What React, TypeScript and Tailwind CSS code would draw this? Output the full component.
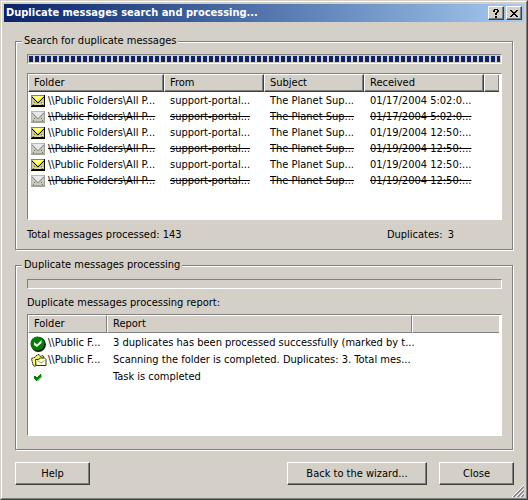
import type { ReactNode } from "react";

type Row = { icon: ReactNode; cells: string[]; struck?: boolean };

const MailIcon = ({ dim }: { dim?: boolean }) => (
  <svg width="16" height="12" viewBox="-1 0 16 12" shapeRendering="crispEdges">
    <path d="M0 0h14v12H0z" fill={dim ? "#a0a0a0" : "#000"} />
    <path d="M0 0h13v1H1v10H0z" fill={dim ? "#b8b8b8" : "#808080"} />
    <path d="M1 1h12v9H1z" fill={dim ? "#c8c8c8" : "#c8c890"} />
    <path d="M2 1h10v1h-1v1h-1v1H9v1H8v1H6V5H5V4H4V3H3V2H2z" fill={dim ? "#e8e8e8" : "#ffffc0"} />
    {!dim && (
      <path
        d="M3 1h1v1H3zM6 1h1v1H6zM9 1h1v1H9zM5 2h1v1H5zM8 2h1v1H8zM4 3h1v1H4zM7 3h1v1H7zM9 3h1v1H9zM6 4h1v1H6zM7 5h1v1H7zM2 8h1v1H2zM4 9h1v1H4zM6 9h1v1H6zM8 9h1v1H8zM11 8h1v1h-1z"
        fill="#ffff00"
      />
    )}
    <path
      d="M1 2h1v1H1zM2 3h1v1H2zM3 4h1v1H3zM4 5h1v1H4zM5 6h1v1H5zM6 7h2v1H6zM8 6h1v1H8zM9 5h1v1H9zM10 4h1v1h-1zM11 3h1v1h-1zM12 2h1v1h-1z"
      fill={dim ? "#909090" : "#000"}
    />
    <path d="M3 7h1v1H3zM2 9h1v1H2zM10 7h1v1h-1zM11 9h1v1h-1z" fill="#808000" />
  </svg>
);

const DoneIcon = () => (
  <svg width="16" height="16" viewBox="0 0 16 16">
    <circle cx="8.400" cy="8.400" r="7.500" fill="#101010" />
    <circle cx="7.500" cy="7.500" r="7" fill="#008000" />
    <path d="M4 6l3 2.500L11.500 4v3L7 11 4 9z" fill="#ffffff" />
  </svg>
);

const FolderIcon = () => (
  <svg width="17" height="14" viewBox="-1 0 17 14">
    <path d="M.5 4.500l4-1.500L6 1l2-.5L9 2.500l3-1 1 2-7 2L4 12.500 2 11z" fill="#ffff60" stroke="#202020" strokeDasharray="2 .5" />
    <path d="M4.500 5.500h3l2-1.500h4l1.500 1.500v6h-10z" fill="#ffffd8" stroke="#303030" />
    <path d="M6.500 6.500l3.500 2.500 3.500-2.500" fill="none" stroke="#a0a070" />
  </svg>
);

const TickIcon = () => (
  <svg width="16" height="9" viewBox="-4 0 16 9" shapeRendering="crispEdges">
    <path d="M1 4l2 2 5-5v3L4 8H3L1 6z" fill="#b0b0b0" />
    <path d="M0 3h1l2 2 4-5v3L3 8H2L0 5z" fill="#008000" />
  </svg>
);

const messages: Row[] = [
  "01/17/2004 5:02:0...",
  "01/17/2004 5:02:0...",
  "01/19/2004 12:50:...",
  "01/19/2004 12:50:...",
  "01/19/2004 12:50:...",
  "01/19/2004 12:50:...",
].map((received, i) => ({
  icon: <MailIcon dim={i % 2 === 1} />,
  cells: ["\\\\Public Folders\\All P...", "support-portal...", "The Planet Sup...", received],
  struck: i % 2 === 1,
}));

const report: Row[] = [
  { icon: <DoneIcon />, cells: ["\\\\Public F...", "3 duplicates has been processed successfully (marked by t..."] },
  { icon: <FolderIcon />, cells: ["\\\\Public F...", "Scanning the folder is completed. Duplicates: 3. Total mes..."] },
  { icon: <TickIcon />, cells: ["", "Task is completed"] },
];

const Group = ({ title, children }: { title: string; children: ReactNode }) => (
  <fieldset className="min-w-0 mr-px border border-[#808080] pr-[10px] pl-[11px] shadow-[1px_1px_0_#fff,inset_1px_1px_0_#fff]">
    <legend className="-ml-[5px] bg-[#d4d0c8] px-[2px] h-[14px] leading-[14px]">{title}</legend>
    {children}
  </fieldset>
);

const Progress = ({ value, label }: { value: number; label: string }) => (
  <div
    role="progressbar"
    aria-label={label}
    aria-valuenow={value}
    className="h-[10px] border border-t-[#808080] border-l-[#808080] border-r-white border-b-white p-px"
  >
    <div
      className="h-[6px] bg-[repeating-linear-gradient(90deg,#0a246a_0_4px,transparent_4px_6px)]"
      style={{ width: `${value}%` }}
    />
  </div>
);

type ListProps = {
  label: string;
  columns: string[];
  widths: string[];
  rows: Row[];
  boxClass: string;
  headClass: string;
  gapClass: string;
  rowClass: string;
};

const List = ({ label, columns, widths, rows, boxClass, headClass, gapClass, rowClass }: ListProps) => (
  <div className={`border border-t-[#808080] border-l-[#808080] border-r-white border-b-white bg-white pr-[2px] ${boxClass}`}>
    <table aria-label={label} className="w-full table-fixed border-separate border-spacing-0">
      <colgroup>
        {widths.map((w, i) => (
          <col key={i} className={w} />
        ))}
        <col />
      </colgroup>
      <thead>
        <tr>
          {columns.map((c) => (
            <th
              key={c}
              className={`h-[18px] border border-t-white border-l-white bg-[#d4d0c8] p-0 pl-[5px] text-left font-normal leading-[14px] ${headClass}`}
            >
              {c}
            </th>
          ))}
          <th className={`border border-t-white border-l-white bg-[#d4d0c8] p-0 ${headClass} border-r-0`} />
        </tr>
      </thead>
      <tbody>
        <tr aria-hidden="true">
          <td className={`p-0 ${gapClass}`} />
        </tr>
        {rows.map((row, i) => (
          <tr key={i}>
            {row.cells.map((cell, j) => (
              <td key={j} className="p-0">
                <div className={`flex items-center whitespace-nowrap ${rowClass} ${j === 0 ? "pl-[2px]" : "pl-[6px]"}`}>
                  {j === 0 && <span className="flex w-[18px] shrink-0">{row.icon}</span>}
                  <span className={row.struck ? "line-through" : ""}>{cell}</span>
                </div>
              </td>
            ))}
            <td className="p-0" />
          </tr>
        ))}
      </tbody>
    </table>
  </div>
);

const raised =
  "border border-t-white border-l-white border-r-[#404040] border-b-[#404040] bg-[#d4d0c8] shadow-[inset_-1px_-1px_0_#808080]";

const Button = ({ className, children }: { className: string; children: ReactNode }) => (
  <button className={`h-[23px] leading-[14px] ${raised} ${className}`}>{children}</button>
);

export default function App() {
  return (
    <div className="border border-t-[#d4d0c8] border-l-[#d4d0c8] border-r-[#404040] border-b-[#404040] font-['DejaVu_Sans_Condensed','DejaVu_Sans',sans-serif] text-[11px] text-black">
      <div className="relative border border-t-white border-l-white border-r-[#808080] border-b-[#808080] bg-[#d4d0c8] p-[2px]">
        <header className="flex h-[18px] items-center gap-[2px] bg-linear-to-r from-[#0a246a] to-[#a6caf0] pr-[2px] pl-[2px]">
          <h1 className="flex-1 font-bold text-white">Duplicate messages search and processing...</h1>
          <button aria-label="Help" className={`flex h-[14px] w-[16px] items-center justify-center ${raised}`}>
            <svg width="6" height="9" viewBox="0 0 6 9" shapeRendering="crispEdges">
              <path d="M1 0h4v1h1v2H5v1H4v2H2V4h1V3h1V1H2v2H0V1h1zM2 7h2v2H2z" />
            </svg>
          </button>
          <button aria-label="Close window" className={`flex h-[14px] w-[16px] items-center justify-center ${raised}`}>
            <svg width="8" height="7" viewBox="0 0 8 7" shapeRendering="crispEdges">
              <path d="M0 0h2v1h1v1h2V1h1V0h2v1H7v1H6v1H5v1h1v1h1v1h1v1H6V6H5V5H3v1H2v1H0V6h1V5h1V4h1V3H2V2H1V1H0z" />
            </svg>
          </button>
        </header>

        <main className="flex flex-col gap-[8px] pt-[12px] pr-[10px] pb-[11px] pl-[11px]">
          <Group title="Search for duplicate messages">
            <div className="pt-[6px] pb-[7px]">
              <Progress value={100} label="Search progress" />
              <div className="pt-[9px] pb-[8px]">
                <List
                  label="Duplicate messages"
                  columns={["Folder", "From", "Subject", "Received"]}
                  widths={["w-[136px]", "w-[100px]", "w-[100px]", "w-[120px]"]}
                  rows={messages}
                  boxClass="h-[147px]"
                  headClass="border-r-[#404040] border-b-[#404040] shadow-[inset_-1px_-1px_0_#808080]"
                  gapClass="h-[1px]"
                  rowClass="h-[16px]"
                />
              </div>
              <div className="flex pr-[48px] leading-[14px]">
                <p className="flex-1">Total messages processed: 143</p>
                <p>
                  Duplicates: <span className="pl-[2px]">3</span>
                </p>
              </div>
            </div>
          </Group>

          <Group title="Duplicate messages processing">
            <div className="pt-[7px] pb-[13px]">
              <Progress value={0} label="Processing progress" />
              <p className="pt-[7px] pb-[4px] leading-[14px]">Duplicate messages processing report:</p>
              <List
                label="Processing report"
                columns={["Folder", "Report"]}
                widths={["w-[79px]", "w-[305px]"]}
                rows={report}
                boxClass="h-[122px]"
                headClass="border-r-[#808080] border-b-[#808080]"
                gapClass="h-[2px]"
                rowClass="h-[17px]"
              />
            </div>
          </Group>

          <footer className="flex gap-[12px] pt-[4px]">
            <Button className="w-[75px]">Help</Button>
            <div className="flex-1" />
            <Button className="w-[140px]">Back to the wizard...</Button>
            <Button className="w-[75px]">Close</Button>
          </footer>
        </main>

        <svg className="absolute right-[2px] bottom-[1px]" width="12" height="12" viewBox="0 0 12 12">
          <path d="M1.500 12L12 1.500M5.500 12L12 5.500M9.500 12L12 9.500" stroke="#808080" strokeWidth="1.500" />
          <path d="M0 12L12 0M4 12l8-8M8 12l4-4" stroke="#fff" strokeWidth="1" />
        </svg>
      </div>
    </div>
  );
}
